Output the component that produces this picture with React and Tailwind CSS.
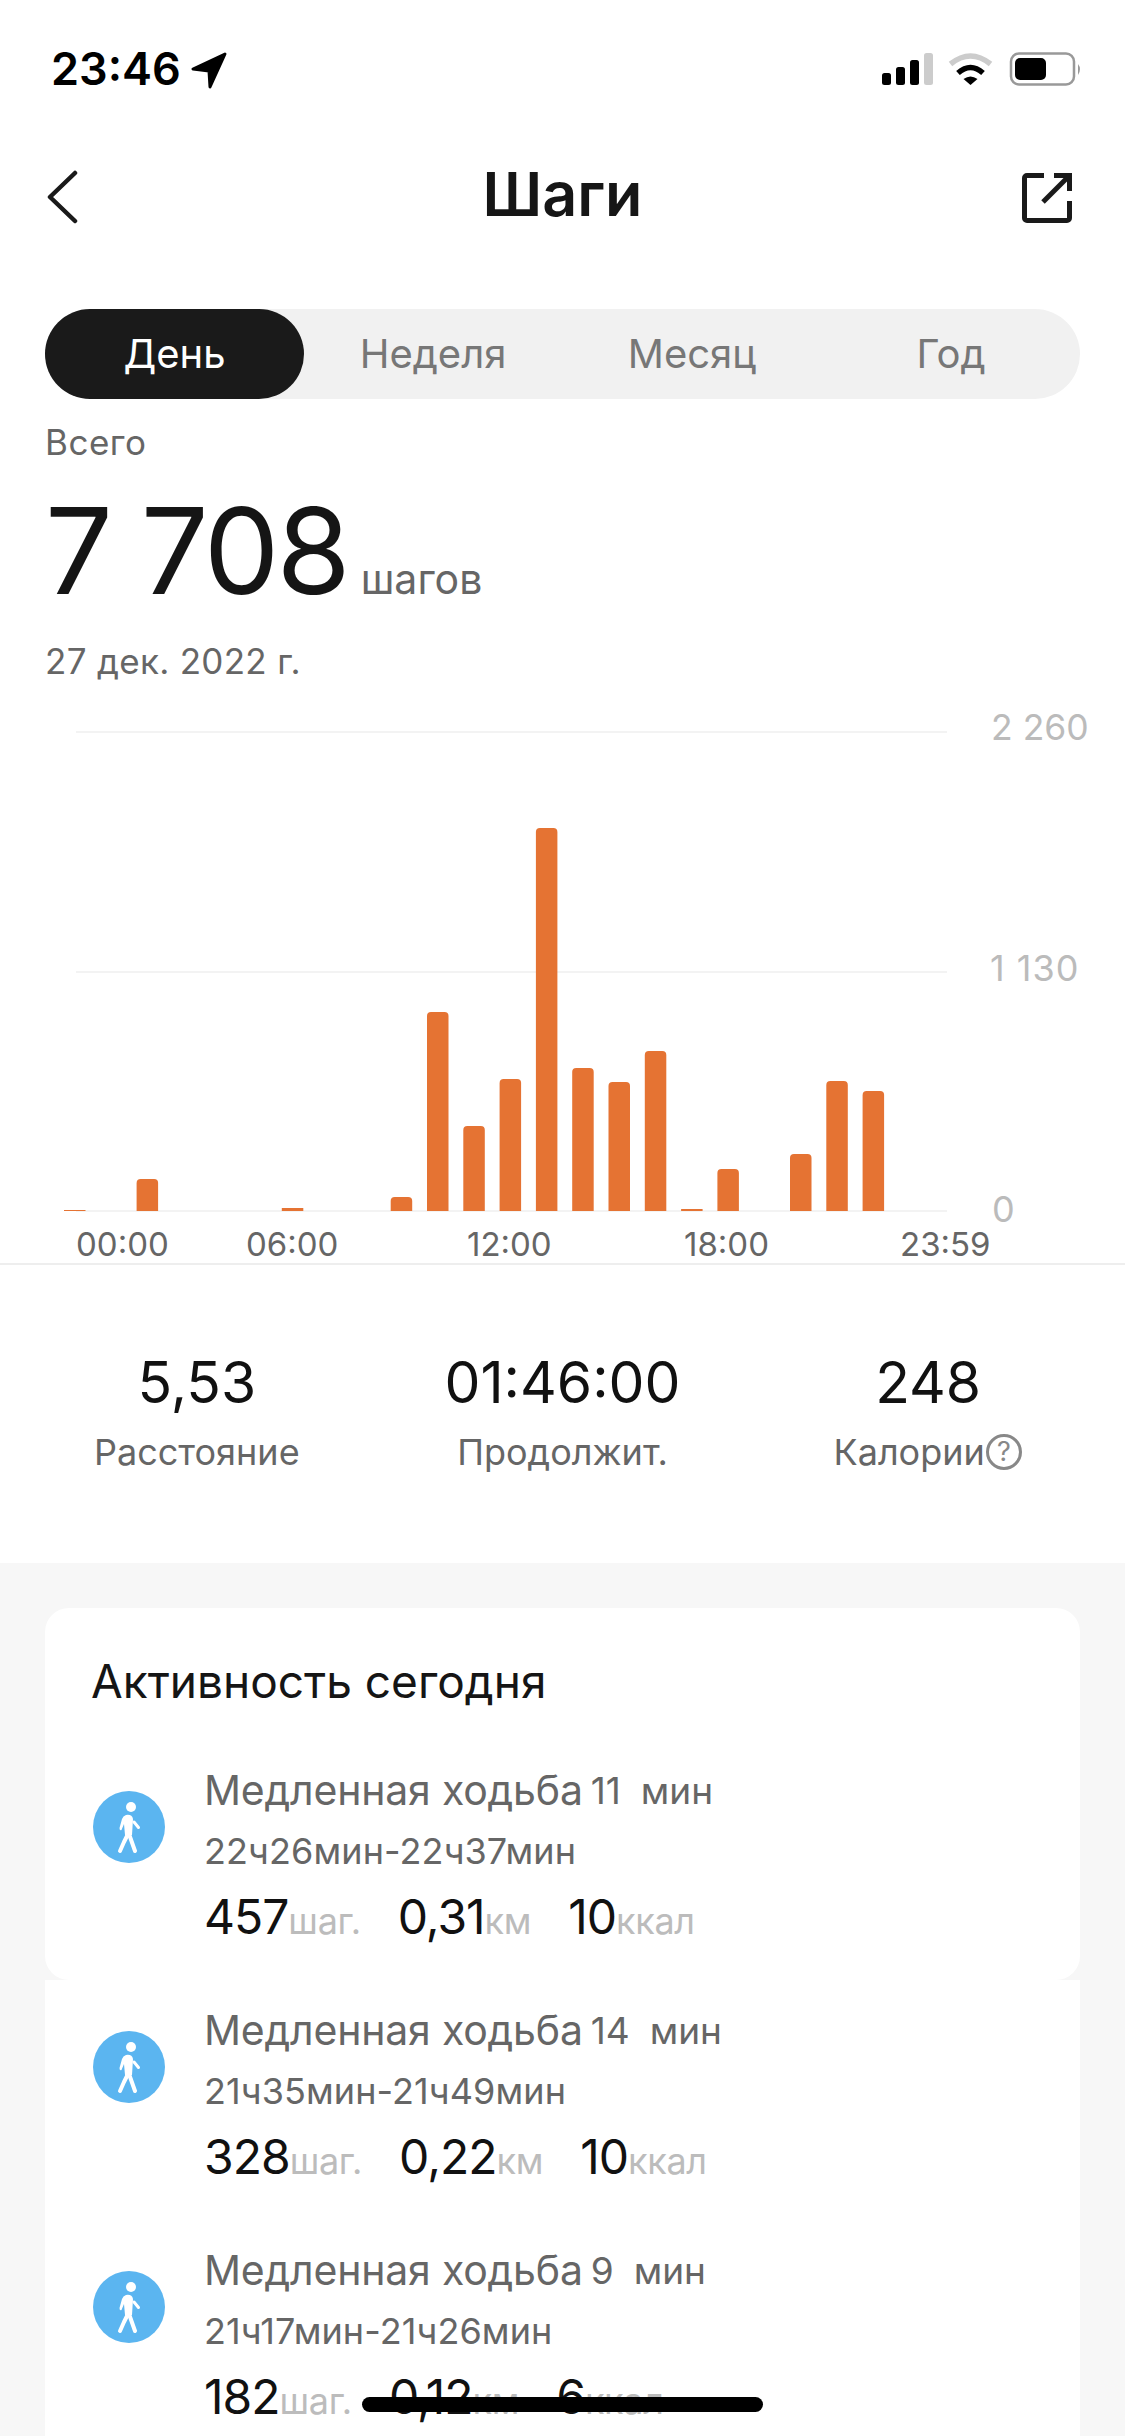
const BARS = [
  [0, 1], [2, 32], [6, 3], [9, 14], [10, 199], [11, 85], [12, 132], [13, 383],
  [14, 143], [15, 129], [16, 160], [17, 2], [18, 42], [20, 57], [21, 130], [22, 120],
];

const ACTIVITIES = [
  { min: "11", range: "22ч26мин-22ч37мин", steps: "457", km: "0,31", kcal: "10" },
  { min: "14", range: "21ч35мин-21ч49мин", steps: "328", km: "0,22", kcal: "10" },
  { min: "9", range: "21ч17мин-21ч26мин", steps: "182", km: "0,12", kcal: "6" },
];

function Walker() {
  return (
    <svg viewBox="0 0 72 72" className="w-[72px] h-[72px] shrink-0">
      <circle cx="36" cy="36" r="36" fill="#5bb5f0" />
      <circle cx="38" cy="16" r="5" fill="#fff" />
      <path d="M33 24 Q39 23 40 28 L39 44 L32 44 L31 33 L28.5 39 Q26.5 40 26.5 37 L29 28 Q30 25 33 24 Z" fill="#fff" />
      <g stroke="#fff" strokeLinecap="round" strokeLinejoin="round" fill="none">
        <path d="M41 31 L45.5 36.5" strokeWidth="3" />
        <path d="M36 43 L42 60" strokeWidth="4" />
        <path d="M34 45 L31 51 L27 60" strokeWidth="4" />
      </g>
    </svg>
  );
}

function Stat({ value, unit }) {
  return (
    <span className="flex items-baseline">
      <span className="text-[48px] text-[#111] tracking-[-1px]">{value}</span>
      <span className="text-[36px] text-[#bcbcbc] tracking-[-0.3px]">{unit}</span>
    </span>
  );
}

function Activity({ a }) {
  return (
    <div className="h-[240px] flex items-start pl-[48px]">
      <div className="pt-[31px]"><Walker /></div>
      <div className="ml-[39px]">
        <div className="h-[61px] flex items-center text-[#666] text-[37px]">
          <span className="text-[41px] tracking-[-0.2px]">Медленная ходьба</span>
          <span className="ml-[8px]">{a.min}</span>
          <span className="ml-[20px]">мин</span>
        </div>
        <div className="h-[60px] flex items-center text-[#666] text-[36px] tracking-[0.1px]">{a.range}</div>
        <div className="h-[72px] flex items-center gap-[37px]">
          <Stat value={a.steps} unit="шаг." />
          <Stat value={a.km} unit="км" />
          <Stat value={a.kcal} unit="ккал" />
        </div>
      </div>
    </div>
  );
}

function Metric({ value, label, help }) {
  return (
    <div className="flex flex-col items-center">
      <div className="h-[70px] flex items-center text-[57px] text-[#111]">{value}</div>
      <div className="mt-[9px] h-[50px] flex items-center text-[36px] text-[#666]">
        {label}
        {help && (
          <svg viewBox="0 0 38 38" className="w-[38px] h-[38px]">
            <circle cx="19" cy="19" r="16.5" fill="none" stroke="#888" strokeWidth="3" />
            <text x="19" y="28" textAnchor="middle" fontSize="27" fill="#888">?</text>
          </svg>
        )}
      </div>
    </div>
  );
}

export default function App() {
  return (
    <div className="relative w-[1125px] h-[2436px] overflow-hidden bg-white font-['Inter','Noto_Sans',sans-serif]">
      {/* status bar */}
      <div className="h-[132px] relative">
        <span className="absolute left-[51px] top-[42px] text-[45px] leading-[54px] font-semibold text-black">23:46</span>
        <svg viewBox="0 0 40 40" className="absolute left-[188px] top-[50px] w-[40px] h-[40px]">
          <path d="M37 4 L5 19 L21 21 L22 37 Z" fill="#000" stroke="#000" strokeWidth="3" strokeLinejoin="round" />
        </svg>
        <svg viewBox="0 0 200 40" className="absolute left-[882px] top-[50px] w-[200px] h-[40px]">
          <rect x="0" y="23" width="9" height="12" rx="2.5" fill="#000" />
          <rect x="14" y="17" width="9" height="18" rx="2.5" fill="#000" />
          <rect x="28" y="10" width="9" height="25" rx="2.5" fill="#000" />
          <rect x="42" y="3" width="9" height="32" rx="2.5" fill="#ccc" />
          <g transform="translate(66 2)">
            <path d="M2.5 12 Q22.5 -4 42.5 12" stroke="#ccc" strokeWidth="5.5" fill="none" />
            <path d="M10 21 Q22.5 10 35 21" stroke="#000" strokeWidth="5.5" fill="none" />
            <path d="M15.5 27 Q22.5 22 29.5 27 L22.5 33 Z" fill="#000" />
          </g>
          <rect x="129" y="3.5" width="63" height="31" rx="8" fill="none" stroke="#999" strokeWidth="2.5" />
          <rect x="133" y="8" width="31" height="22" rx="5" fill="#000" />
          <path d="M196 14 Q200 19 196 25 Z" fill="#999" />
        </svg>
      </div>

      {/* nav */}
      <div className="h-[126px] flex items-center justify-between px-[46px] relative">
        <svg viewBox="0 0 32 54" className="w-[32px] h-[54px] mt-[4px]" fill="none">
          <path d="M29 3 L4 27 L29 51" stroke="#1a1a1a" strokeWidth="4.5" strokeLinecap="round" strokeLinejoin="round" />
        </svg>
        <span className="absolute inset-x-0 text-center text-[61px] font-semibold text-[#161616]">Шаги</span>
        <svg viewBox="0 0 50 50" className="w-[50px] h-[50px] mr-[7px] mt-[6px]" fill="none">
          <path d="M22 2.5 H5 a2.5 2.5 0 0 0 -2.5 2.5 V45 a2.5 2.5 0 0 0 2.5 2.5 H45 a2.5 2.5 0 0 0 2.5 -2.5 V28" stroke="#1a1a1a" strokeWidth="5" />
          <path d="M32 2.5 H47.5 V18" stroke="#1a1a1a" strokeWidth="5" />
          <path d="M46 4 L21 29" stroke="#1a1a1a" strokeWidth="5" />
        </svg>
      </div>

      {/* tabs */}
      <div className="mt-[51px] mx-[45px] h-[90px] rounded-[45px] bg-[#f1f1f1] flex items-center text-[40px] text-[#777]">
        <div className="w-[259px] h-full rounded-[45px] bg-[#1a1a1a] text-white flex items-center justify-center">День</div>
        <div className="w-[258px] text-center">Неделя</div>
        <div className="w-[260px] text-center">Месяц</div>
        <div className="w-[258px] text-center">Год</div>
      </div>

      {/* total */}
      <div className="px-[45px]">
        <div className="mt-[23px] h-[40px] flex items-center text-[35px] text-[#666] tracking-[0.5px]">Всего</div>
        <div className="mt-[24px] h-[130px] flex items-baseline">
          <span className="text-[120px] leading-[130px] text-[#151515] tracking-[-3px]">7 708</span>
          <span className="ml-[13px] text-[41px] text-[#666]">шагов</span>
        </div>
        <div className="mt-[25px] h-[40px] flex items-center text-[35px] text-[#666] tracking-[0.3px]">27 дек. 2022 г.</div>
      </div>

      {/* chart */}
      <div className="relative h-[584px] border-b-2 border-[#eeeeee]">
        <svg viewBox="0 0 1125 584" className="w-[1125px] h-[584px]">
          <rect x="76" y="50" width="871" height="2" fill="#f3f3f3" />
          <rect x="76" y="290" width="871" height="2" fill="#f3f3f3" />
          <rect x="76" y="529" width="871" height="2" fill="#f3f3f3" />
          {BARS.map(([i, h]) => (
            <path
              key={i}
              d={h > 5
                ? `M${64 + i * 36.3} 530 v${-h + 4} q0 -4 4 -4 h13.5 q4 0 4 4 v${h - 4} z`
                : `M${64 + i * 36.3} 530 v${-h} h21.5 v${h} z`}
              fill="#e57333"
            />
          ))}
        </svg>
        <div className="absolute left-[991px] top-[25px] text-[35.5px] leading-[44px] text-[#bbb]">2 260</div>
        <div className="absolute left-[990px] top-[265px] text-[36px] leading-[44px] text-[#bbb] tracking-[1px]">1 130</div>
        <div className="absolute left-[992px] top-[506px] text-[36px] leading-[44px] text-[#bbb]">0</div>
        <div className="absolute left-[76px] top-[543px] text-[33px] leading-[40px] text-[#666]">00:00</div>
        <div className="absolute left-[246px] top-[543px] text-[33px] leading-[40px] text-[#666]">06:00</div>
        <div className="absolute left-[467px] top-[543px] text-[33px] leading-[40px] text-[#666]">12:00</div>
        <div className="absolute left-[684px] top-[543px] text-[33px] leading-[40px] text-[#666]">18:00</div>
        <div className="absolute left-[900px] top-[543px] text-[33px] leading-[40px] text-[#666]">23:59</div>
      </div>

      {/* metrics */}
      <div className="h-[298px] px-[14px] pt-[83px] grid grid-cols-3 items-start">
        <Metric value="5,53" label="Расстояние" />
        <Metric value="01:46:00" label="Продолжит." />
        <Metric value="248" label="Калории" help />
      </div>

      {/* lower */}
      <div className="bg-[#f7f7f7] pt-[45px] px-[45px] h-[900px]">
        <div className="bg-white rounded-[24px] h-[372px]">
          <div className="h-[134px] pl-[46px] pt-[43px] flex items-start text-[46px] leading-[60px] text-[#151515]">Активность сегодня</div>
          <div className="mt-[18px]"><Activity a={ACTIVITIES[0]} /></div>
        </div>
        <div className="bg-white h-[520px] pt-[20px]">
          <Activity a={ACTIVITIES[1]} />
          <Activity a={ACTIVITIES[2]} />
        </div>
      </div>

      <div className="absolute left-[362px] top-[2397px] w-[401px] h-[15px] rounded-full bg-black" />
    </div>
  );
}
